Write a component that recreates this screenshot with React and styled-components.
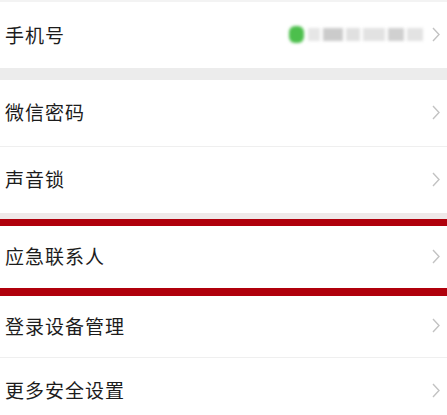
import styled, { createGlobalStyle } from "styled-components";

const GlobalStyle = createGlobalStyle`
  body {
    margin: 0;
    background: #ffffff;
    font-family: "Noto Sans CJK SC", "Noto Sans", sans-serif;
  }
`;

const Page = styled.div`
  width: 447px;
  height: 415px;
  overflow: hidden;
  background: #ffffff;
  border-top: 2px solid #f3f3f3;
  padding-top: 1px;
  box-sizing: border-box;
`;

const Group = styled.div`
  display: flex;
  flex-direction: column;
  background: #ffffff;
`;

const Gap = styled.div`
  height: ${(p) => p.$h}px;
  background: ${(p) => p.$color || "#ececec"};
`;

const Divider = styled.div`
  height: 1px;
  background: #efefef;
`;

const Row = styled.div`
  display: flex;
  align-items: center;
  justify-content: space-between;
  height: ${(p) => p.$h || 66}px;
  padding: 0 7px 0 5px;
  box-sizing: content-box;
  ${(p) =>
    p.$marked &&
    `
    border-top: 7px solid #b0000c;
    border-bottom: 8px solid #b0000c;
  `}
`;

const Label = styled.span`
  font-size: 19px;
  letter-spacing: 1px;
  color: #1c1c1c;
  margin-top: -3px;
`;

const Right = styled.div`
  display: flex;
  align-items: center;
  gap: 9px;
  margin-top: -2px;
`;

const Masked = styled.div`
  display: flex;
  align-items: center;
  gap: 3px;
  filter: blur(1.8px);
`;

const Dot = styled.span`
  width: 15px;
  height: 17px;
  border-radius: 6px;
  background: #4cbf4c;
  margin-right: 1px;
`;

const Block = styled.span`
  width: ${(p) => p.$w}px;
  height: 13px;
  background: ${(p) => p.$c || "#d6d6d6"};
`;

const Chevron = () => (
  <svg width="8" height="15" viewBox="0 0 8 15">
    <polyline
      points="1,1 7,7.5 1,14"
      fill="none"
      stroke="#c3c3c3"
      strokeWidth="1.4"
    />
  </svg>
);

const Item = ({ label, h, marked, children }) => (
  <Row $h={h} $marked={marked}>
    <Label>{label}</Label>
    <Right>
      {children}
      <Chevron />
    </Right>
  </Row>
);

export default function App() {
  return (
    <>
      <GlobalStyle />
      <Page>
        <Group>
          <Item label="手机号" h={65}>
            <Masked>
              <Dot />
              <Block $w={12} $c="#e6e6e6" />
              <Block $w={20} $c="#cbcbcb" />
              <Block $w={14} $c="#e0e0e0" />
              <Block $w={22} $c="#e2e2e2" />
              <Block $w={16} $c="#d0d0d0" />
              <Block $w={16} $c="#e3e3e3" />
            </Masked>
          </Item>
        </Group>
        <Gap $h={12} />
        <Group>
          <Item label="微信密码" />
          <Divider />
          <Item label="声音锁" />
        </Group>
        <Gap $h={6} $color="#efe9e9" />
        <Group>
          <Item label="应急联系人" h={62} marked />
          <Item label="登录设备管理" h={61} />
          <Divider />
          <Item label="更多安全设置" />
        </Group>
      </Page>
    </>
  );
}
